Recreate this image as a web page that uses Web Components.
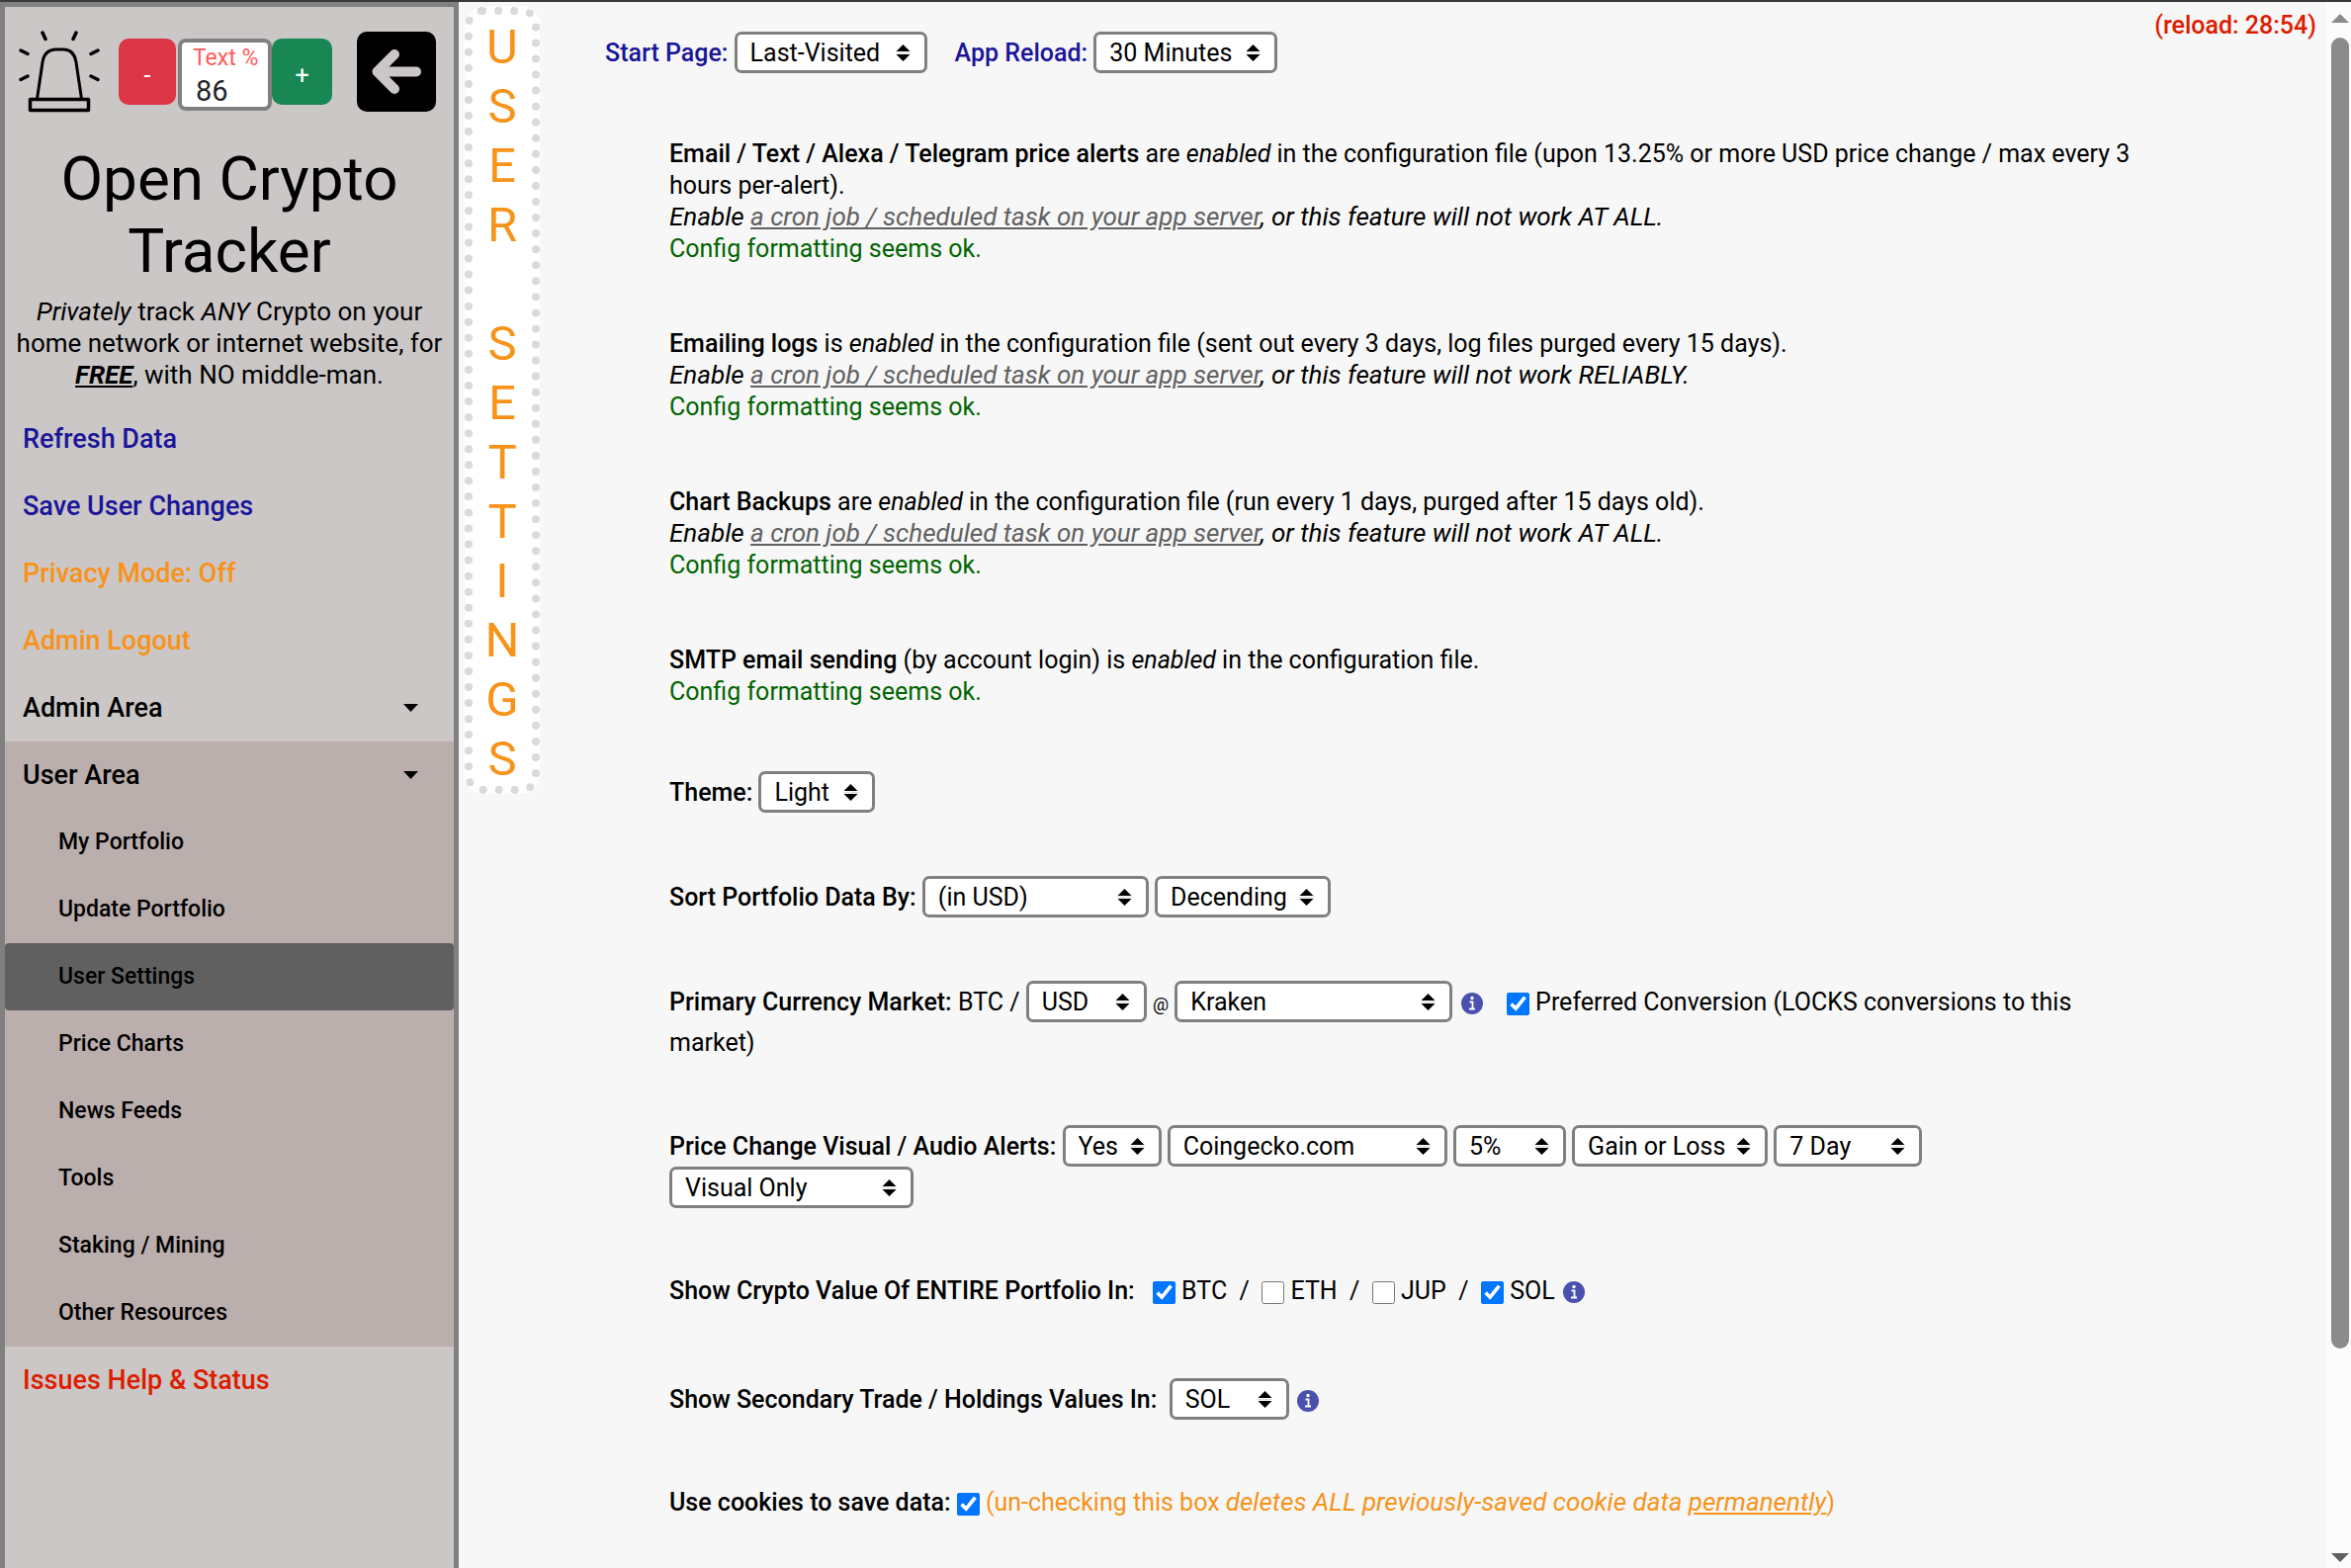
<!DOCTYPE html>
<html lang="en">
<head>
<meta charset="utf-8">
<title>Open Crypto Tracker - User Settings</title>
<style>
  body { margin: 0; font: 25px/32px Roboto, "Liberation Sans", sans-serif; color: #000; background: #f7f7f7; }
</style>
</head>
<body>
<oct-app></oct-app>

<template id="app-tpl">
  <style>
    :host { display: flex; box-sizing: border-box; height: 100vh; overflow: hidden; border-top: 2px solid #3a3838; background: #f7f7f7; }
    oct-main { flex: 1; min-width: 0; }
  </style>
  <oct-sidebar></oct-sidebar>
  <oct-rail text="USER SETTINGS"></oct-rail>
  <oct-main></oct-main>
  <oct-scrollbar></oct-scrollbar>
</template>

<template id="sidebar-tpl">
  <style>
    :host { display: block; box-sizing: border-box; width: 464px; border: 5px solid #808080; border-bottom: 0; background: #cbc7c6; flex: none; }
    .tools { display: flex; align-items: flex-start; padding: 23px 18px 0 14px; }
    .siren { width: 82px; height: 84px; display: block; }
    button { font: inherit; border: 0; padding: 0; color: #fff; border-radius: 10px; cursor: pointer; }
    .minus, .plus { height: 67px; margin-top: 9px; padding-top: 8px; }
    .minus { width: 58px; margin-left: 19px; background: #dc3545; }
    .plus { width: 61px; background: #198754; }
    .zoom { display: flex; flex-direction: column; box-sizing: border-box; width: 95px; height: 73px; margin: 9px 0 0 2px; padding: 2px 0 0 11px; border: 4px solid #808080; border-radius: 8px; background: #fff; }
    .zoom label { font-size: 23px; line-height: 28px; color: #ff5a5a; white-space: nowrap; }
    .zoom input { font: 29px/34px Roboto, "Liberation Sans", sans-serif; height: 35px; width: 60px; border: 0; padding: 2px 0 0 3px; box-sizing: border-box; outline: 0; color: #212529; background: none; }
    .back { margin-left: auto; margin-top: 2px; width: 80px; height: 81px; background: #000; }
    .back svg { display: block; width: 80px; height: 81px; }
    h1 { margin: 30px 0 0; font-size: 62px; line-height: 73px; font-weight: 400; text-align: center; }
    p { margin: 9px 0 0; text-align: center; font-size: 26px; }
    p b { text-decoration: underline; }
    nav { margin-top: 15px; }
  </style>
  <div class="tools">
    <svg class="siren" viewBox="0 0 82 84" fill="none" stroke="#000" stroke-width="3" stroke-linecap="round" stroke-linejoin="round" role="img" aria-label="Alarm">
      <path d="M18.500 70 L24 33 Q26 20 38 20 H45 Q56 20 58 33 L63.500 70"/>
      <path d="M11.500 70.500 H70.500 V81.500 H11.500 Z" stroke-width="3.500"/>
      <path d="M24 3 L27 9.500 M58 3 L55 9.500 M2 21 L9 24.500 M80 21 L73 24.500 M2 50.500 L9 47 M80 50.500 L73 47" stroke-width="3.500"/>
    </svg>
    <button class="minus" type="button">-</button>
    <div class="zoom"><label for="pct">Text %</label><input id="pct" type="text" value="86"></div>
    <button class="plus" type="button">+</button>
    <button class="back" type="button" aria-label="Collapse menu">
      <svg viewBox="0 0 80 81" fill="none" stroke="#cbc7c6" stroke-width="10" stroke-linecap="round" stroke-linejoin="round"><path d="M38 23 L20.500 40.500 L38 58 M21 40.500 H60"/></svg>
    </button>
  </div>
  <h1>Open Crypto Tracker</h1>
  <p><i>Privately</i> track <i>ANY</i> Crypto on your<br>home network or internet website, for<br><i><b>FREE</b></i>, with NO middle-man.</p>
  <nav>
    <oct-nav-item tone="blue">Refresh Data</oct-nav-item>
    <oct-nav-item tone="blue">Save User Changes</oct-nav-item>
    <oct-nav-item tone="orange">Privacy Mode: Off</oct-nav-item>
    <oct-nav-item tone="orange">Admin Logout</oct-nav-item>
    <oct-nav-item expandable>Admin Area</oct-nav-item>
    <oct-nav-group>
      <oct-nav-item expandable>User Area</oct-nav-item>
      <oct-nav-item sub>My Portfolio</oct-nav-item>
      <oct-nav-item sub>Update Portfolio</oct-nav-item>
      <oct-nav-item sub active>User Settings</oct-nav-item>
      <oct-nav-item sub>Price Charts</oct-nav-item>
      <oct-nav-item sub>News Feeds</oct-nav-item>
      <oct-nav-item sub>Tools</oct-nav-item>
      <oct-nav-item sub>Staking / Mining</oct-nav-item>
      <oct-nav-item sub>Other Resources</oct-nav-item>
    </oct-nav-group>
    <oct-nav-item tone="red">Issues Help &amp; Status</oct-nav-item>
  </nav>
</template>

<template id="nav-group-tpl">
  <style>:host { display: block; background: #bbafae; }</style>
  <slot></slot>
</template>

<template id="nav-item-tpl">
  <style>
    :host { display: block; font-size: 27px; font-weight: 500; color: #000; }
    :host([tone="blue"]) { color: #1a1599; }
    :host([tone="orange"]) { color: #f7931a; }
    :host([tone="red"]) { color: #dd1c00; }
    :host([sub]) { font-size: 23px; }
    a { display: flex; align-items: center; justify-content: space-between; height: 68px; padding: 0 36px 0 18px; color: inherit; text-decoration: none; }
    :host([sub]) a { padding-left: 54px; }
    :host([active]) a { background: #606060; border-radius: 4px; }
    svg { display: none; width: 15px; height: 8px; }
    :host([expandable]) svg { display: block; }
  </style>
  <a href="#"><slot></slot><svg viewBox="0 0 15 8" aria-hidden="true"><path d="M0 0 H15 L7.500 8 Z"/></svg></a>
</template>

<template id="rail-tpl">
  <style>
    :host { display: flex; flex-direction: column; align-items: center; align-self: flex-start; box-sizing: border-box; flex: none; width: 76px; margin: 5px 0 0 6px; border: 8px dotted #dadada; border-radius: 18px; background: #fff; color: #f7931a; font-size: 49px; line-height: 55px; }
    span { box-sizing: border-box; height: 60px; padding-top: 5px; }
  </style>
</template>

<template id="main-tpl">
  <style>
    :host { display: block; }
    header { display: flex; align-items: flex-start; justify-content: space-between; padding: 0 9px 0 66px; }
    .top { display: flex; gap: 28px; padding-top: 30px; color: #1a1599; line-height: 39px; }
    .timer { color: #dd1c00; font-weight: 500; padding-top: 8px; }
    .body { display: flex; flex-direction: column; gap: 64px; padding: 66px 172px 0 131px; }
    b, .name { font-weight: 500; }
    a { color: #606060; }
    .note { font-size: 26px; line-height: 30px; }
    .ok { color: #006400; }
    .row { line-height: 39px; }
    .checks { padding-bottom: 5px; }
    .warn { color: #f7931a; }
    .at { font-size: 18px; }
    .gap { margin-left: 12px; }
    input { width: 23px; height: 23px; margin: 0; vertical-align: middle; }
  </style>
  <header>
    <div class="top">
      <span><label class="name" for="start">Start Page:</label> <oct-select style="--w:195px"><select id="start"><option>Last-Visited</option></select></oct-select></span>
      <span><label class="name" for="reload">App Reload:</label> <oct-select style="--w:186px"><select id="reload"><option>30 Minutes</option></select></oct-select></span>
    </div>
    <div class="timer">(reload: 28:54)</div>
  </header>
  <div class="body">
    <div><b>Email / Text / Alexa / Telegram price alerts</b> are <i>enabled</i> in the configuration file (upon 13.25% or more USD price change / max every 3 hours per-alert).<br>
      <i class="note">Enable <a href="#">a cron job / scheduled task on your app server</a>, or this feature will not work AT ALL.</i><br>
      <span class="ok">Config formatting seems ok.</span></div>
    <div><b>Emailing logs</b> is <i>enabled</i> in the configuration file (sent out every 3 days, log files purged every 15 days).<br>
      <i class="note">Enable <a href="#">a cron job / scheduled task on your app server</a>, or this feature will not work RELIABLY.</i><br>
      <span class="ok">Config formatting seems ok.</span></div>
    <div><b>Chart Backups</b> are <i>enabled</i> in the configuration file (run every 1 days, purged after 15 days old).<br>
      <i class="note">Enable <a href="#">a cron job / scheduled task on your app server</a>, or this feature will not work AT ALL.</i><br>
      <span class="ok">Config formatting seems ok.</span></div>
    <div><b>SMTP email sending</b> (by account login) is <i>enabled</i> in the configuration file.<br>
      <span class="ok">Config formatting seems ok.</span></div>
    <div class="row"><label class="name" for="theme">Theme:</label> <oct-select style="--w:118px"><select id="theme"><option>Light</option></select></oct-select></div>
    <div class="row"><label class="name" for="sort">Sort Portfolio Data By:</label> <oct-select style="--w:229px"><select id="sort"><option>(in USD)</option></select></oct-select> <oct-select style="--w:178px"><select aria-label="Sort order"><option>Decending</option></select></oct-select></div>
    <div class="row"><label class="name" for="cur">Primary Currency Market:</label> BTC / <oct-select style="--w:122px"><select id="cur"><option>USD</option></select></oct-select> <span class="at">@</span> <oct-select style="--w:281px"><select aria-label="Exchange"><option>Kraken</option></select></oct-select> <oct-info></oct-info>&nbsp; <input class="gap" type="checkbox" id="lock" checked> <label for="lock">Preferred Conversion (LOCKS conversions to this market)</label></div>
    <div class="row"><label class="name" for="alerts">Price Change Visual / Audio Alerts:</label> <oct-select style="--w:100px"><select id="alerts"><option>Yes</option></select></oct-select> <oct-select style="--w:283px"><select aria-label="Source"><option>Coingecko.com</option></select></oct-select> <oct-select style="--w:114px"><select aria-label="Percent"><option>5%</option></select></oct-select> <oct-select style="--w:198px"><select aria-label="Direction"><option>Gain or Loss</option></select></oct-select> <oct-select style="--w:150px"><select aria-label="Period"><option>7 Day</option></select></oct-select> <oct-select style="--w:247px"><select aria-label="Alert type"><option>Visual Only</option></select></oct-select></div>
    <div class="row checks"><span class="name">Show Crypto Value Of ENTIRE Portfolio In:</span> <input class="gap" type="checkbox" id="btc" checked> <label for="btc">BTC</label> &nbsp;/ &nbsp;<input type="checkbox" id="eth"> <label for="eth">ETH</label> &nbsp;/ &nbsp;<input type="checkbox" id="jup"> <label for="jup">JUP</label> &nbsp;/ &nbsp;<input type="checkbox" id="sol" checked> <label for="sol">SOL</label> <oct-info></oct-info></div>
    <div class="row"><label class="name" for="second">Show Secondary Trade / Holdings Values In:</label> &nbsp;<oct-select style="--w:121px"><select id="second"><option>SOL</option></select></oct-select> <oct-info></oct-info></div>
    <div class="row checks"><label class="name" for="cookies">Use cookies to save data:</label> <input type="checkbox" id="cookies" checked><span class="warn"> (un-checking this box <i class="note">deletes ALL previously-saved cookie data <u>permanently</u></i>)</span></div>
  </div>
</template>

<template id="select-tpl">
  <style>
    :host { display: inline-grid; width: var(--w, auto); vertical-align: baseline; align-items: baseline; color: #000; }
    ::slotted(select) { grid-area: 1 / 1; appearance: none; box-sizing: border-box; width: 100%; height: 42px; margin: 0; padding: 2px 30px 0 13px; border: 3px solid #808080; border-radius: 7px; background: #fff; color: #000; font: inherit; line-height: 32px; }
    svg { grid-area: 1 / 1; justify-self: end; align-self: center; width: 15px; height: 17px; margin-right: 17px; pointer-events: none; z-index: 1; }
  </style>
  <slot></slot>
  <svg viewBox="0 0 15 17" aria-hidden="true"><path d="M0.500 7 L7.500 0 L14.500 7 Z M0.500 10 L7.500 17 L14.500 10 Z"/><path d="M0 8.500 H15" stroke="#ddd"/></svg>
</template>

<template id="info-tpl">
  <style>
    :host { display: inline-block; width: 22px; height: 22px; margin-left: 2px; vertical-align: middle; }
    svg { display: block; width: 22px; height: 22px; }
  </style>
  <svg viewBox="0 0 22 22" role="img" aria-label="Info"><circle cx="11" cy="11" r="11" fill="#4a50ae"/><circle cx="11" cy="5.500" r="1.700" fill="#fff"/><path d="M8.500 9.500 H11.500 V16.500 M8 16.500 H14" fill="none" stroke="#fff" stroke-width="1.800"/></svg>
</template>

<template id="scrollbar-tpl">
  <style>
    :host { display: flex; flex-direction: column; align-items: center; box-sizing: border-box; width: 26px; flex: none; padding: 12px 0 6px 4px; background: #fcfcfc; }
    svg { display: block; width: 18px; height: 9px; flex: none; }
    .track { flex: 1; width: 18px; margin: 15px 0 9px; }
    .thumb { height: 87%; border-radius: 9px; background: #8b8b8b; }
  </style>
  <svg viewBox="0 0 18 9"><path d="M0 9 L9 0 L18 9 Z" fill="#8b8b8b"/></svg>
  <div class="track"><div class="thumb"></div></div>
  <svg viewBox="0 0 18 9"><path d="M0 0 H18 L9 9 Z" fill="#606060"/></svg>
</template>

<script>
  const define = (tag, tpl, setup) => customElements.define(tag, class extends HTMLElement {
    constructor() {
      super();
      this.attachShadow({ mode: "open" }).append(document.getElementById(tpl).content.cloneNode(true));
    }
    connectedCallback() { if (setup) setup(this); }
  });

  define("oct-select", "select-tpl");
  define("oct-info", "info-tpl");
  define("oct-nav-item", "nav-item-tpl");
  define("oct-nav-group", "nav-group-tpl");
  define("oct-scrollbar", "scrollbar-tpl");
  define("oct-rail", "rail-tpl", el => {
    for (const ch of el.getAttribute("text")) {
      const s = document.createElement("span");
      s.textContent = ch;
      el.shadowRoot.append(s);
    }
  });
  define("oct-sidebar", "sidebar-tpl");
  define("oct-main", "main-tpl");
  define("oct-app", "app-tpl");
</script>
</body>
</html>
